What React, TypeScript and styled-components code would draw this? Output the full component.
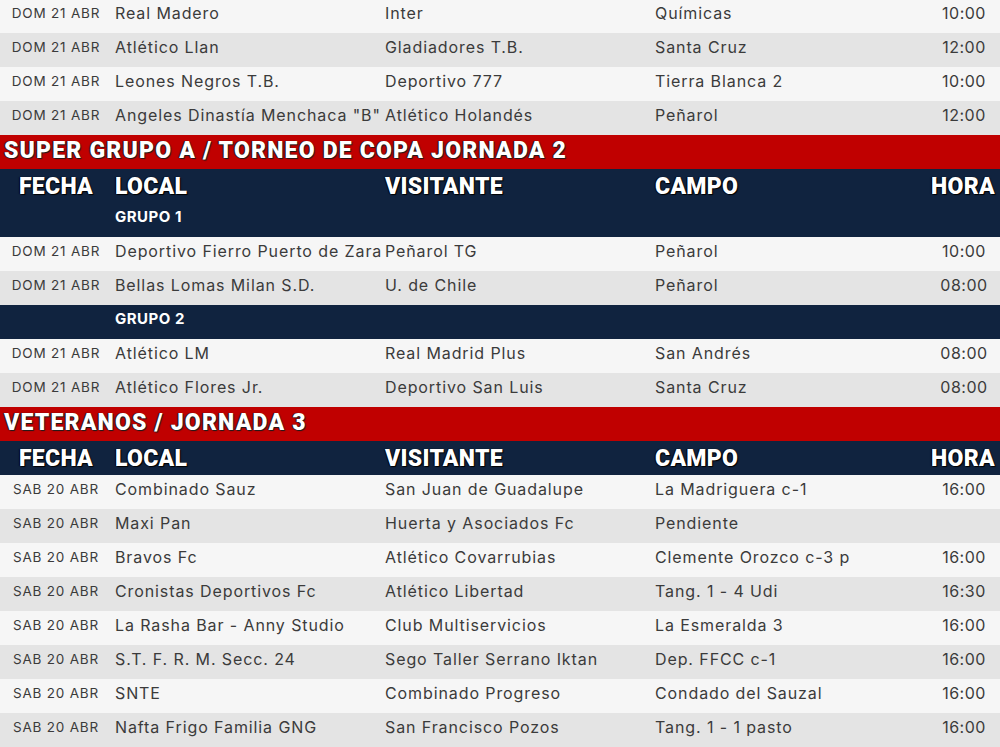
import React from "react";
import styled, { createGlobalStyle } from "styled-components";

const GlobalStyle = createGlobalStyle`
  html, body {
    margin: 0;
    padding: 0;
    background: #ffffff;
    overflow: hidden;
  }
  * {
    box-sizing: border-box;
  }
`;

const COLS = "112px 270px 270px 274px 74px";

const Table = styled.div`
  width: 1000px;
  margin-top: -1px;
  font-family: Inter, "Noto Sans", sans-serif;
`;

const Banner = styled.div`
  height: 34px;
  background: #c00000;
  color: #ffffff;
  display: flex;
  align-items: center;
  padding: 0 0 3px 4px;
  font-family: Roboto, "Liberation Sans", sans-serif;
  font-weight: 900;
  font-size: 23px;
  letter-spacing: 1.2px;
  text-shadow: 1px 1px 1px #1a1a1a, -1px 0 1px #1a1a1a;
  white-space: nowrap;
`;

const HeadRow = styled.div`
  display: grid;
  grid-template-columns: ${COLS};
  height: 34px;
  background: #10233f;
  align-items: center;
`;

const HeadCell = styled.div<{ $center?: boolean }>`
  color: #ffffff;
  font-family: Roboto, "Liberation Sans", sans-serif;
  font-weight: 900;
  font-size: 23px;
  letter-spacing: 0.3px;
  padding-left: ${(p) => (p.$center ? "0" : "3px")};
  text-align: ${(p) => (p.$center ? "center" : "left")};
  text-shadow: 1px 1px 1px #000000, -1px 0 1px #000000;
`;

const GroupRow = styled.div`
  display: grid;
  grid-template-columns: ${COLS};
  height: 34px;
  background: #10233f;
  align-items: center;
  padding-bottom: 7px;
`;

const GroupLabel = styled.div`
  grid-column: 2;
  padding-left: 3px;
  color: #ffffff;
  font-weight: 700;
  font-size: 15px;
  letter-spacing: 0.5px;
`;

const Row = styled.div<{ $alt: boolean }>`
  display: grid;
  grid-template-columns: ${COLS};
  height: 34px;
  align-items: center;
  padding-bottom: 7px;
  background: ${(p) => (p.$alt ? "#e4e4e4" : "#f6f6f6")};
  color: #3b3b3b;
`;

const DateCell = styled.div`
  text-align: center;
  font-size: 13.5px;
  letter-spacing: 0.8px;
  white-space: nowrap;
`;

const TextCell = styled.div`
  padding-left: 3px;
  font-size: 16px;
  letter-spacing: 0.9px;
  white-space: nowrap;
  overflow: hidden;
`;

const TimeCell = styled.div`
  text-align: center;
  font-size: 16px;
  letter-spacing: 0.5px;
  padding-left: 2px;
`;

type Match = [string, string, string, string, string];

type Block =
  | { kind: "rows"; rows: Match[] }
  | { kind: "banner"; title: string }
  | { kind: "head" }
  | { kind: "group"; label: string };

const D = "DOM 21 ABR";
const S = "SAB 20 ABR";

const blocks: Block[] = [
  {
    kind: "rows",
    rows: [
      [D, "Real Madero", "Inter", "Químicas", "10:00"],
      [D, "Atlético Llan", "Gladiadores T.B.", "Santa Cruz", "12:00"],
      [D, "Leones Negros T.B.", "Deportivo 777", "Tierra Blanca 2", "10:00"],
      [D, 'Angeles Dinastía Menchaca "B"', "Atlético Holandés", "Peñarol", "12:00"],
    ],
  },
  { kind: "banner", title: "SUPER GRUPO A / TORNEO DE COPA JORNADA 2" },
  { kind: "head" },
  { kind: "group", label: "GRUPO 1" },
  {
    kind: "rows",
    rows: [
      [D, "Deportivo Fierro Puerto de Zaragoza", "Peñarol TG", "Peñarol", "10:00"],
      [D, "Bellas Lomas Milan S.D.", "U. de Chile", "Peñarol", "08:00"],
    ],
  },
  { kind: "group", label: "GRUPO 2" },
  {
    kind: "rows",
    rows: [
      [D, "Atlético LM", "Real Madrid Plus", "San Andrés", "08:00"],
      [D, "Atlético Flores Jr.", "Deportivo San Luis", "Santa Cruz", "08:00"],
    ],
  },
  { kind: "banner", title: "VETERANOS / JORNADA 3" },
  { kind: "head" },
  {
    kind: "rows",
    rows: [
      [S, "Combinado Sauz", "San Juan de Guadalupe", "La Madriguera c-1", "16:00"],
      [S, "Maxi Pan", "Huerta y Asociados Fc", "Pendiente", ""],
      [S, "Bravos Fc", "Atlético Covarrubias", "Clemente Orozco c-3 p", "16:00"],
      [S, "Cronistas Deportivos Fc", "Atlético Libertad", "Tang. 1 - 4 Udi", "16:30"],
      [S, "La Rasha Bar - Anny Studio", "Club Multiservicios", "La Esmeralda 3", "16:00"],
      [S, "S.T. F. R. M. Secc. 24", "Sego Taller Serrano Iktan", "Dep. FFCC c-1", "16:00"],
      [S, "SNTE", "Combinado Progreso", "Condado del Sauzal", "16:00"],
      [S, "Nafta Frigo Familia GNG", "San Francisco Pozos", "Tang. 1 - 1 pasto", "16:00"],
    ],
  },
];

const Header = () => (
  <HeadRow>
    <HeadCell $center>FECHA</HeadCell>
    <HeadCell>LOCAL</HeadCell>
    <HeadCell>VISITANTE</HeadCell>
    <HeadCell>CAMPO</HeadCell>
    <HeadCell $center>HORA</HeadCell>
  </HeadRow>
);

const App: React.FC = () => {
  return (
    <>
      <GlobalStyle />
      <Table>
        {blocks.map((b, i) => {
          if (b.kind === "banner") return <Banner key={i}>{b.title}</Banner>;
          if (b.kind === "head") return <Header key={i} />;
          if (b.kind === "group")
            return (
              <GroupRow key={i}>
                <GroupLabel>{b.label}</GroupLabel>
              </GroupRow>
            );
          return (
            <React.Fragment key={i}>
              {b.rows.map((r, j) => (
                <Row key={j} $alt={j % 2 === 1}>
                  <DateCell>{r[0]}</DateCell>
                  <TextCell>{r[1]}</TextCell>
                  <TextCell>{r[2]}</TextCell>
                  <TextCell>{r[3]}</TextCell>
                  <TimeCell>{r[4]}</TimeCell>
                </Row>
              ))}
            </React.Fragment>
          );
        })}
      </Table>
    </>
  );
};

export default App;
